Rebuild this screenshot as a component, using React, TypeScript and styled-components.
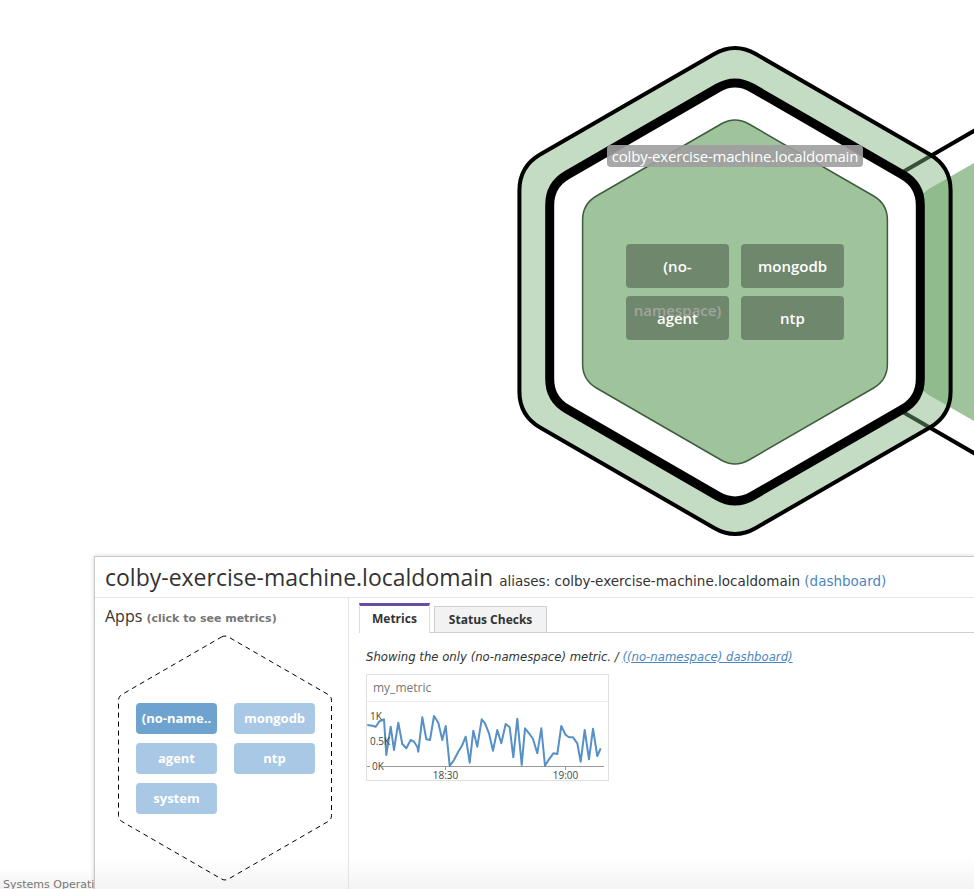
import React from 'react';
import styled, { createGlobalStyle } from 'styled-components';

const GlobalStyle = createGlobalStyle`
  html, body {
    margin: 0;
    padding: 0;
    background: #fff;
    overflow: hidden;
  }
  body {
    font-family: "Open Sans", "Liberation Sans", sans-serif;
    color: #333;
  }
`;

const uiFont = '"DejaVu Sans", "Liberation Sans", sans-serif';

const Page = styled.div`
  position: relative;
  width: 974px;
  height: 889px;
  overflow: hidden;
  display: flex;
  flex-direction: column;
`;

const MapCanvas = styled.div`
  position: relative;
  height: 556px;
  flex: none;
`;

const MapSvg = styled.svg`
  position: absolute;
  left: 0;
  top: 0;
`;

const NodeLabel = styled.div`
  position: absolute;
  left: 607px;
  top: 145px;
  width: 256px;
  height: 22px;
  border-radius: 4px;
  background: rgba(158, 158, 158, 0.9);
  color: #fff;
  font-size: 15px;
  line-height: 22px;
  text-align: center;
  white-space: nowrap;
  letter-spacing: -0.2px;
`;

const MapApps = styled.div`
  position: absolute;
  left: 626px;
  top: 244px;
  display: grid;
  grid-template-columns: 103px 103px;
  grid-auto-rows: 44px;
  column-gap: 12px;
  row-gap: 8px;
`;

const MapTile = styled.div`
  border-radius: 4px;
  background: rgba(63, 74, 60, 0.5);
  color: #fff;
  font-size: 15px;
  font-weight: 600;
  line-height: 44px;
  text-align: center;
  padding: 0 6px;
`;

const Footer = styled.div`
  position: absolute;
  left: 0;
  right: 0;
  bottom: 0;
  height: 20px;
  background: linear-gradient(#fff, #f2f2f2);
  font-family: ${uiFont};
  font-size: 11px;
  color: #777;
  padding-left: 3px;
  line-height: 32px;
  overflow: hidden;
`;

const Panel = styled.div`
  position: relative;
  z-index: 1;
  flex: none;
  margin-left: 94px;
  width: 900px;
  height: 340px;
  border: 1px solid #c9c9c9;
  box-shadow: 0 0 4px rgba(0, 0, 0, 0.18);
  background: linear-gradient(#fff 0, #fff 300px, #f3f3f3 334px);
  display: flex;
  flex-direction: column;
`;

const Header = styled.div`
  height: 41px;
  border-bottom: 1px solid #e6e6e6;
  padding: 4px 10px 0;
  box-sizing: border-box;
  display: flex;
  align-items: baseline;
  gap: 6px;
  white-space: nowrap;
`;

const HostName = styled.span`
  font-size: 23px;
  color: #333;
`;

const Aliases = styled.span`
  font-family: ${uiFont};
  font-size: 13.5px;
  color: #333;
`;

const Link = styled.a`
  color: #4a87c0;
  text-decoration: none;
`;

const Body = styled.div`
  flex: 1;
  display: grid;
  grid-template-columns: 254px 1fr;
`;

const AppsColumn = styled.div`
  border-right: 1px solid #e3e3e3;
  padding: 8px 0 0 10px;
`;

const AppsTitle = styled.div`
  font-size: 16px;
  line-height: 20px;
  color: #333;

  small {
    font-family: ${uiFont};
    font-size: 11px;
    font-weight: 700;
    color: #777;
  }
`;

const HexArea = styled.div`
  position: relative;
  margin: 6px 0 0 4px;
  width: 232px;
  height: 252px;
`;

const HexOutline = styled.svg`
  position: absolute;
  left: 0;
  top: 0;
`;

const AppGrid = styled.div`
  position: relative;
  padding: 68px 0 0 27px;
  display: grid;
  grid-template-columns: 81px 81px;
  grid-auto-rows: 31px;
  column-gap: 17px;
  row-gap: 9px;
`;

const AppTile = styled.div<{ $active?: boolean }>`
  border-radius: 4px;
  background: ${(p) => (p.$active ? '#6fa3cf' : '#a8c8e5')};
  color: #fff;
  font-size: 13px;
  font-weight: 700;
  line-height: 31px;
  text-align: center;
  white-space: nowrap;
  overflow: hidden;
`;

const DetailColumn = styled.div`
  padding: 5px 0 0 10px;
`;

const TabBar = styled.div`
  display: flex;
  align-items: flex-end;
  gap: 4px;
  border-bottom: 1px solid #cfcfcf;
  height: 29px;
`;

const Tab = styled.div<{ $active?: boolean }>`
  box-sizing: border-box;
  font-size: 12px;
  font-weight: 700;
  color: #333;
  padding: 0 ${(p) => (p.$active ? '12px' : '14px')};
  border: 1px solid ${(p) => (p.$active ? '#ddd' : '#cfcfcf')};
  border-top: ${(p) => (p.$active ? '3px solid #674ea7' : '1px solid #cfcfcf')};
  border-bottom: none;
  background: ${(p) => (p.$active ? '#fff' : '#f2f2f2')};
  height: ${(p) => (p.$active ? '30px' : '26px')};
  line-height: ${(p) => (p.$active ? '26px' : '25px')};
  margin-bottom: ${(p) => (p.$active ? '-1px' : '0')};
`;

const Content = styled.div`
  padding: 16px 7px;
`;

const Showing = styled.div`
  font-family: ${uiFont};
  font-size: 11.7px;
  font-style: italic;
  line-height: 17px;
  color: #333;
  white-space: nowrap;

  a {
    color: #4a87c0;
    text-decoration: underline;
  }
`;

const GraphCard = styled.div`
  margin-top: 8px;
  width: 243px;
  height: 107px;
  box-sizing: border-box;
  border: 1px solid #e0e0e0;
`;

const GraphTitle = styled.div`
  height: 26px;
  border-bottom: 1px solid #ececec;
  padding-left: 6px;
  font-size: 12px;
  line-height: 26px;
  color: #777;
`;

const hexPath = (cx: number, cy: number, r: number, round: number) => {
  const pts = Array.from({ length: 6 }, (_, i) => {
    const a = (Math.PI / 180) * (60 * i - 90);
    return [cx + r * Math.cos(a), cy + r * Math.sin(a)];
  });
  const t = round / r;
  let d = '';
  pts.forEach((p, i) => {
    const prev = pts[(i + 5) % 6];
    const next = pts[(i + 1) % 6];
    const a = [p[0] + (prev[0] - p[0]) * t, p[1] + (prev[1] - p[1]) * t];
    const b = [p[0] + (next[0] - p[0]) * t, p[1] + (next[1] - p[1]) * t];
    d += `${i === 0 ? 'M' : 'L'}${a[0].toFixed(1)},${a[1].toFixed(1)} Q${p[0].toFixed(1)},${p[1].toFixed(1)} ${b[0].toFixed(1)},${b[1].toFixed(1)} `;
  });
  return d + 'Z';
};

const series = [
  [0.3, 23], [5.3, 23.7], [8.7, 24.7], [12, 19.7], [15.3, 18], [17, 17.3], [19.3, 53],
  [23.7, 24.7], [27, 48], [31.3, 20.7], [35.3, 42], [39.3, 46.3], [43.7, 38], [47, 39.7],
  [50.3, 44.7], [51.3, 49.7], [55.3, 15.3], [59.3, 37.3], [63, 38], [67, 14], [71.3, 20.7],
  [75.3, 38], [78.7, 24], [82.7, 64], [87, 58], [91.3, 49.7], [95.3, 43], [98.7, 34.7],
  [102.7, 60.7], [106.3, 28.7], [110.3, 44.7], [114.7, 17.3], [118, 21.3], [122, 31.3],
  [126, 48.7], [130.3, 28], [134.3, 41.3], [138.7, 22], [142.7, 25.3], [146.3, 55.3],
  [150.3, 16.7], [154.7, 63], [158, 26.3], [162, 31.3], [166, 37], [170.3, 51.3],
  [174.3, 26.3], [178, 63.7], [182, 57.3], [186.3, 51.3], [190.3, 52], [194.3, 24],
  [198.7, 33], [202, 35.3], [206, 35.3], [210.3, 41.3], [213.7, 59.7], [217.7, 28],
  [222, 57.3], [226, 26.7], [230.3, 54], [233.7, 46.3],
];

function MetricChart() {
  const points = series.map(([x, y]) => `${x},${y}`).join(' ');
  return (
    <svg width="241" height="79" viewBox="0 0 241 79" style={{ display: 'block' }}>
      <line x1="15" y1="64.5" x2="237" y2="64.5" stroke="#999" strokeWidth="1" />
      <line x1="0" y1="64.5" x2="3" y2="64.5" stroke="#999" strokeWidth="1" />
      <line x1="78.5" y1="64.5" x2="78.5" y2="68" stroke="#999" strokeWidth="1" />
      <line x1="198.5" y1="64.5" x2="198.5" y2="68" stroke="#999" strokeWidth="1" />
      <polyline points={points} fill="none" stroke="#5590c6" strokeWidth="2" strokeLinejoin="round" />
      <g fontFamily='"Open Sans", "Liberation Sans", sans-serif' fontSize="10" fill="#444">
        <text x="3" y="18">1K</text>
        <text x="3" y="43">0.5K</text>
        <text x="5" y="68">0K</text>
        <text x="78.5" y="77" textAnchor="middle">18:30</text>
        <text x="198.5" y="77" textAnchor="middle">19:00</text>
      </g>
    </svg>
  );
}

function HostMap() {
  return (
    <MapCanvas>
      <MapSvg width="974" height="556" viewBox="0 0 974 556">
        <path d={hexPath(1083, 292, 224, 18)} fill="#fff" stroke="#000" strokeWidth="4" />
        <path d={hexPath(1083, 292, 192, 14)} fill="#9fc49c" />
        <path d={hexPath(735, 291, 249, 24)} fill="rgba(124,177,124,0.45)" stroke="#000" strokeWidth="4" />
        <path d={hexPath(735, 292, 214, 20)} fill="#fff" stroke="#000" strokeWidth="9" />
        <path d={hexPath(735, 292, 176, 16)} fill="#9fc49c" stroke="#3e5c3e" strokeWidth="1.5" />
      </MapSvg>
      <MapApps>
        <MapTile>(no-namespace)</MapTile>
        <MapTile>mongodb</MapTile>
        <MapTile>agent</MapTile>
        <MapTile>ntp</MapTile>
      </MapApps>
      <NodeLabel>colby-exercise-machine.localdomain</NodeLabel>
    </MapCanvas>
  );
}

export default function App() {
  return (
    <Page>
      <GlobalStyle />
      <HostMap />
      <Footer>Systems Operation</Footer>
      <Panel>
        <Header>
          <HostName>colby-exercise-machine.localdomain</HostName>
          <Aliases>
            aliases: colby-exercise-machine.localdomain <Link href="#">(dashboard)</Link>
          </Aliases>
        </Header>
        <Body>
          <AppsColumn>
            <AppsTitle>
              Apps <small>(click to see metrics)</small>
            </AppsTitle>
            <HexArea>
              <HexOutline width="232" height="252" viewBox="0 0 232 252">
                <path d={hexPath(116, 123, 123, 4)} fill="none" stroke="#000" strokeWidth="1" strokeDasharray="5 4" />
              </HexOutline>
              <AppGrid>
                <AppTile $active>(no-name..</AppTile>
                <AppTile>mongodb</AppTile>
                <AppTile>agent</AppTile>
                <AppTile>ntp</AppTile>
                <AppTile>system</AppTile>
              </AppGrid>
            </HexArea>
          </AppsColumn>
          <DetailColumn>
            <TabBar>
              <Tab $active>Metrics</Tab>
              <Tab>Status Checks</Tab>
            </TabBar>
            <Content>
              <Showing>
                Showing the only (no-namespace) metric. / <a href="#">((no-namespace) dashboard)</a>
              </Showing>
              <GraphCard>
                <GraphTitle>my_metric</GraphTitle>
                <MetricChart />
              </GraphCard>
            </Content>
          </DetailColumn>
        </Body>
      </Panel>
    </Page>
  );
}
